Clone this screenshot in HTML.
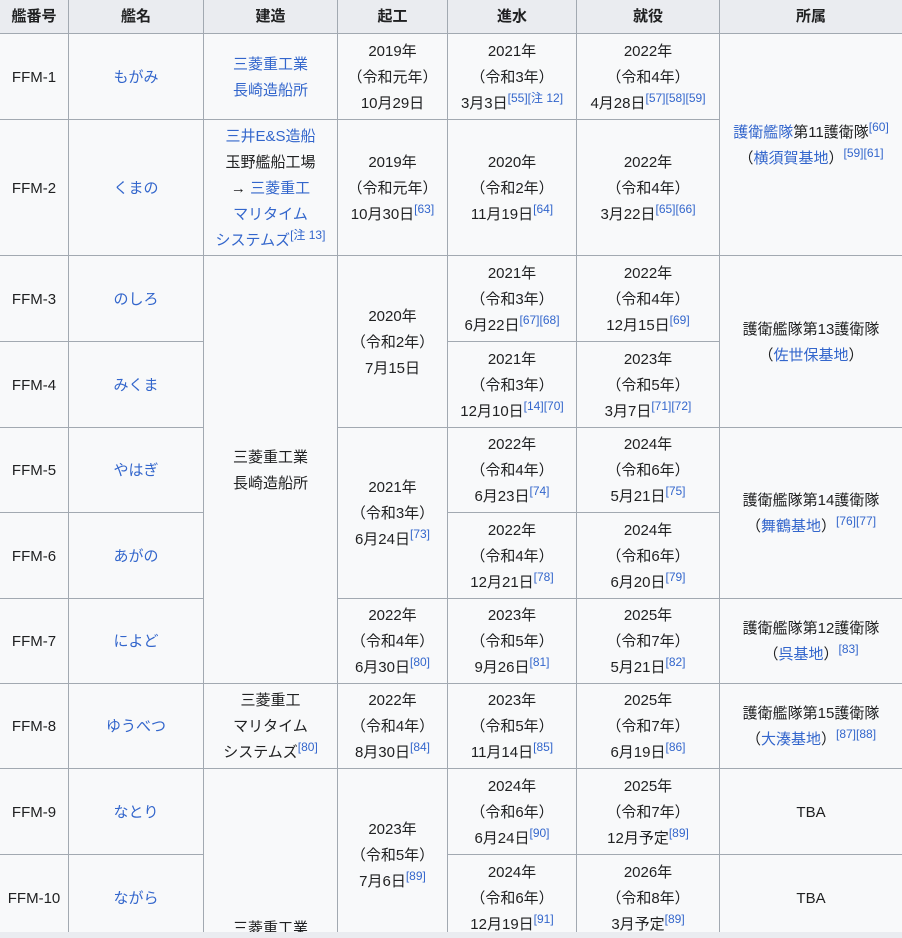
<!DOCTYPE html>
<html><head><meta charset="utf-8"><style>
html,body{margin:0;padding:0;width:902px;height:938px;overflow:hidden;background:#f8f9fa}
table{border-collapse:collapse;table-layout:fixed;width:903px;font-family:"Liberation Sans","Noto Sans CJK JP",sans-serif;font-size:15px;color:#202122;background:#f8f9fa;margin:-1px 0 0 -1px}
td,th{border:1px solid #a2a9b1;text-align:center;vertical-align:middle;padding:0 4px;line-height:26px}
td{padding-top:2px}
th{background:#eaecf0;font-weight:bold}
a{color:#3366cc;text-decoration:none}
sup{font-size:12px;line-height:0;color:#3366cc;vertical-align:6px}
.bar{position:absolute;left:0;top:932px;width:902px;height:6px;background:#eaecf0}
</style></head><body>
<table>
<colgroup><col style="width:69px"><col style="width:135px"><col style="width:134px"><col style="width:110px"><col style="width:129px"><col style="width:143px"><col style="width:183px"></colgroup>
<tr style="height:34px"><th>艦番号</th><th>艦名</th><th>建造</th><th>起工</th><th>進水</th><th>就役</th><th>所属</th></tr>
<tr style="height:86px"><td>FFM-1</td><td><a>もがみ</a></td><td><a>三菱重工業<br>長崎造船所</a></td><td>2019年<br>（令和元年）<br>10月29日</td><td>2021年<br>（令和3年）<br>3月3日<sup>[55][注 12]</sup></td><td>2022年<br>（令和4年）<br>4月28日<sup>[57][58][59]</sup></td><td rowspan="2"><a>護衛艦隊</a>第11護衛隊<sup>[60]</sup><br>（<a>横須賀基地</a>）<sup>[59][61]</sup></td></tr>
<tr style="height:136px"><td>FFM-2</td><td><a>くまの</a></td><td><a>三井E&amp;S造船</a><br>玉野艦船工場<br>→ <a>三菱重工<br>マリタイム<br>システムズ</a><sup>[注 13]</sup></td><td>2019年<br>（令和元年）<br>10月30日<sup>[63]</sup></td><td>2020年<br>（令和2年）<br>11月19日<sup>[64]</sup></td><td>2022年<br>（令和4年）<br>3月22日<sup>[65][66]</sup></td></tr>
<tr style="height:86px"><td>FFM-3</td><td><a>のしろ</a></td><td rowspan="5">三菱重工業<br>長崎造船所</td><td rowspan="2">2020年<br>（令和2年）<br>7月15日</td><td>2021年<br>（令和3年）<br>6月22日<sup>[67][68]</sup></td><td>2022年<br>（令和4年）<br>12月15日<sup>[69]</sup></td><td rowspan="2">護衛艦隊第13護衛隊<br>（<a>佐世保基地</a>）</td></tr>
<tr style="height:86px"><td>FFM-4</td><td><a>みくま</a></td><td>2021年<br>（令和3年）<br>12月10日<sup>[14][70]</sup></td><td>2023年<br>（令和5年）<br>3月7日<sup>[71][72]</sup></td></tr>
<tr style="height:85px"><td>FFM-5</td><td><a>やはぎ</a></td><td rowspan="2">2021年<br>（令和3年）<br>6月24日<sup>[73]</sup></td><td>2022年<br>（令和4年）<br>6月23日<sup>[74]</sup></td><td>2024年<br>（令和6年）<br>5月21日<sup>[75]</sup></td><td rowspan="2">護衛艦隊第14護衛隊<br>（<a>舞鶴基地</a>）<sup>[76][77]</sup></td></tr>
<tr style="height:86px"><td>FFM-6</td><td><a>あがの</a></td><td>2022年<br>（令和4年）<br>12月21日<sup>[78]</sup></td><td>2024年<br>（令和6年）<br>6月20日<sup>[79]</sup></td></tr>
<tr style="height:85px"><td>FFM-7</td><td><a>によど</a></td><td>2022年<br>（令和4年）<br>6月30日<sup>[80]</sup></td><td>2023年<br>（令和5年）<br>9月26日<sup>[81]</sup></td><td>2025年<br>（令和7年）<br>5月21日<sup>[82]</sup></td><td>護衛艦隊第12護衛隊<br>（<a>呉基地</a>）<sup>[83]</sup></td></tr>
<tr style="height:85px"><td>FFM-8</td><td><a>ゆうべつ</a></td><td>三菱重工<br>マリタイム<br>システムズ<sup>[80]</sup></td><td>2022年<br>（令和4年）<br>8月30日<sup>[84]</sup></td><td>2023年<br>（令和5年）<br>11月14日<sup>[85]</sup></td><td>2025年<br>（令和7年）<br>6月19日<sup>[86]</sup></td><td>護衛艦隊第15護衛隊<br>（<a>大湊基地</a>）<sup>[87][88]</sup></td></tr>
<tr style="height:86px"><td>FFM-9</td><td><a>なとり</a></td><td rowspan="4">三菱重工業<br>長崎造船所</td><td rowspan="2">2023年<br>（令和5年）<br>7月6日<sup>[89]</sup></td><td>2024年<br>（令和6年）<br>6月24日<sup>[90]</sup></td><td>2025年<br>（令和7年）<br>12月予定<sup>[89]</sup></td><td>TBA</td></tr>
<tr style="height:86px"><td>FFM-10</td><td><a>ながら</a></td><td>2024年<br>（令和6年）<br>12月19日<sup>[91]</sup></td><td>2026年<br>（令和8年）<br>3月予定<sup>[89]</sup></td><td>TBA</td></tr>
<tr style="height:86px"><td>FFM-11</td><td></td><td></td><td></td><td></td><td>TBA</td></tr>
<tr style="height:86px"><td>FFM-12</td><td></td><td></td><td></td><td></td><td>TBA</td></tr>
</table>
<div class="bar"></div>
</body></html>
